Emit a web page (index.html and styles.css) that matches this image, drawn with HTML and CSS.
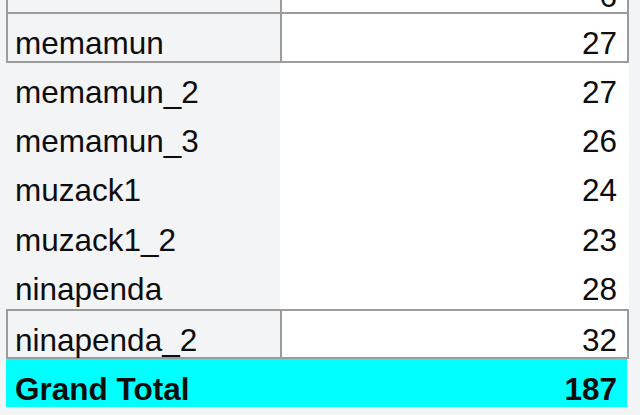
FILE: index.html
```html
<!DOCTYPE html>
<html>
<head>
<meta charset="utf-8">
<link rel="stylesheet" href="styles.css">
</head>
<body>
<div class="sheet">
  <div class="row boxed cut"><div class="name"></div><div class="num">6</div></div>
  <div class="row boxed first"><div class="name">memamun</div><div class="num">27</div></div>
  <div class="row"><div class="name">memamun_2</div><div class="num">27</div></div>
  <div class="row"><div class="name">memamun_3</div><div class="num">26</div></div>
  <div class="row"><div class="name">muzack1</div><div class="num">24</div></div>
  <div class="row"><div class="name">muzack1_2</div><div class="num">23</div></div>
  <div class="row"><div class="name">ninapenda</div><div class="num">28</div></div>
  <div class="row boxed"><div class="name">ninapenda_2</div><div class="num">32</div></div>
  <div class="row total"><div class="name">Grand Total</div><div class="num">187</div></div>
</div>
</body>
</html>
```

FILE: styles.css
```css
html, body {
  margin: 0;
  padding: 0;
  background: #f3f4f6;
  overflow: hidden;
}
.sheet {
  margin-top: -35.4px;
  margin-left: 6px;
  width: 623px;
  font-family: "Liberation Sans", Arial, sans-serif;
  font-size: 31.5px;
  color: #0d0d0d;
}
.row {
  display: flex;
  height: 49.2px;
}
.name, .num {
  box-sizing: border-box;
  height: 100%;
  padding-top: 12px;
  line-height: 35px;
  white-space: nowrap;
}
.name {
  width: 274px;
  padding-left: 9px;
}
.num {
  width: 349px;
  background: #ffffff;
  text-align: right;
  padding-right: 12px;
}
.boxed {
  height: 50px;
}
.boxed.first {
  height: 51px;
}
.boxed .name,
.boxed .num {
  border: 2px solid #9c9c9c;
}
.boxed .name {
  border-right-width: 0;
  padding-left: 7px;
}
.boxed .num {
  padding-right: 10px;
}
.cut {
  height: 47.4px;
}
.cut .name,
.cut .num {
  border-bottom-width: 0;
}
.total {
  height: 48px;
  width: 621px;
  background: #00ffff;
}
.total .name,
.total .num {
  background: #00ffff;
  font-weight: bold;
  padding-top: 12.6px;
}
.total .num {
  width: 347px;
  padding-right: 10px;
}
```
